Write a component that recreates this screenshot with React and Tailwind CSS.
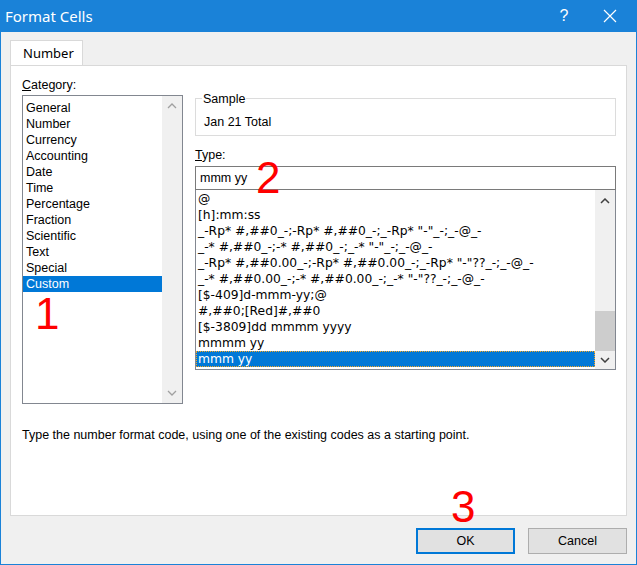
import React from "react";

const cats = ["General","Number","Currency","Accounting","Date","Time","Percentage","Fraction","Scientific","Text","Special","Custom"];
const types = ["@","[h]:mm:ss",'_-Rp* #,##0_-;-Rp* #,##0_-;_-Rp* "-"_-;_-@_-','_-* #,##0_-;-* #,##0_-;_-* "-"_-;_-@_-','_-Rp* #,##0.00_-;-Rp* #,##0.00_-;_-Rp* "-"??_-;_-@_-','_-* #,##0.00_-;-* #,##0.00_-;_-* "-"??_-;_-@_-',"[$-409]d-mmm-yy;@","#,##0;[Red]#,##0","[$-3809]dd mmmm yyyy","mmmm yy","mmm yy"];

const Up = () => (<svg width="10" height="6" viewBox="0 0 10 6"><path d="M1 5L5 1L9 5" fill="none" stroke="#a0a0a0" strokeWidth="1.3"/></svg>);
const Down = () => (<svg width="10" height="6" viewBox="0 0 10 6"><path d="M1 1L5 5L9 1" fill="none" stroke="#a0a0a0" strokeWidth="1.3"/></svg>);
const UpD = () => (<svg width="10" height="6" viewBox="0 0 10 6"><path d="M1 5L5 1L9 5" fill="none" stroke="#404040" strokeWidth="1.5"/></svg>);
const DownD = () => (<svg width="10" height="6" viewBox="0 0 10 6"><path d="M1 1L5 5L9 1" fill="none" stroke="#404040" strokeWidth="1.5"/></svg>);

export default function App() {
  return (
    <div className="w-[637px] h-[565px] bg-[#f0f0f0] border-x border-b border-[#1a82d8] flex flex-col text-[12.5px] text-black" style={{fontFamily:'"Liberation Sans", Arial, sans-serif'}}>
      <div className="h-[32px] bg-[#1a82d8] flex items-center text-white -mx-px">
        <div className="pl-[5px] text-[15px] flex-1" style={{fontFamily:'"Noto Sans", sans-serif'}}>Format Cells</div>
        <div className="w-[46px] text-center text-[16px]">?</div>
        <div className="w-[46px] flex justify-center mr-[4px]">
          <svg width="14" height="14" viewBox="0 0 14 14"><path d="M1 1L13 13M13 1L1 13" stroke="white" strokeWidth="1.2"/></svg>
        </div>
      </div>
      <div className="pl-[9px] pt-[8px] flex">
        <div className="w-[73px] h-[26px] bg-white border border-b-0 border-[#d9d9d9] flex items-center pl-[12px] text-[13px]" style={{fontFamily:'"Noto Sans", sans-serif'}}>Number</div>
      </div>
      <div className="mx-[9px] -mt-px h-[451px] bg-white border border-[#d9d9d9] relative">
        <div className="flex pt-[10px] pl-[11px]">
          <div className="w-[161px]">
            <div className="h-[19px]"><span className="underline">C</span>ategory:</div>
            <div className="h-[309px] border border-[#828790] flex">
              <div className="flex-1 pt-[4px]">
                {cats.map(c => (
                  <div key={c} className={`h-[16px] leading-[16px] pl-[3px] ${c==="Custom"?"bg-[#0078d7] text-white":""}`}>{c}</div>
                ))}
              </div>
              <div className="w-[20px] bg-[#f0f0f0] flex flex-col justify-between items-center py-[7px]"><Up/><Down/></div>
            </div>
          </div>
          <div className="ml-[12px] w-[421px] pt-[22px]">
            <div className="h-[38px] border border-[#dcdcdc] relative">
              <span className="absolute -top-[9px] left-[6px] bg-white px-px">Sample</span>
              <div className="pt-[14px] pl-[8px]">Jan 21 Total</div>
            </div>
            <div className="mt-[8px] h-[22px] pt-[2px]"><span className="underline">T</span>ype:</div>
            <div className="h-[24px] border border-[#7a7a7a] flex items-center pl-[4px]">mmm yy</div>
            <div className="h-[180px] border border-[#828790] border-t-0 flex" style={{fontFamily:'"DejaVu Sans", sans-serif', fontSize:'12.3px'}}>
              <div className="flex-1 pt-[1px] overflow-hidden">
                {types.map((t,i) => (
                  <div key={i} className={`h-[16px] leading-[16px] pl-[2px] whitespace-nowrap ${i===10?"bg-[#0078d7] text-white outline outline-1 outline-dotted outline-[#f5a623] -outline-offset-1":""}`}>{t}</div>
                ))}
              </div>
              <div className="w-[20px] bg-[#f0f0f0] flex flex-col items-center">
                <div className="h-[22px] flex items-center"><UpD/></div>
                <div className="flex-1"/>
                <div className="h-[40px] w-full bg-[#cdcdcd]"/>
                <div className="h-[18px] flex items-center"><DownD/></div>
              </div>
            </div>
          </div>
        </div>
        <div className="pl-[11px] mt-[22px]">Type the number format code, using one of the existing codes as a starting point.</div>
        <span className="absolute left-[24px] top-[226px] text-[44px] leading-none text-[#ff0000]">1</span>
        <span className="absolute left-[245px] top-[90px] text-[44px] leading-none text-[#ff0000]">2</span>
        <span className="absolute left-[440px] top-[419px] text-[44px] leading-none text-[#ff0000]">3</span>
      </div>
      <div className="flex justify-end gap-[13px] pr-[9px] mt-[12px]">
        <div className="w-[99px] h-[26px] bg-[#e1e1e1] border-2 border-[#0078d7] flex items-center justify-center">OK</div>
        <div className="w-[99px] h-[26px] bg-[#e1e1e1] border border-[#adadad] flex items-center justify-center">Cancel</div>
      </div>
    </div>
  );
}
